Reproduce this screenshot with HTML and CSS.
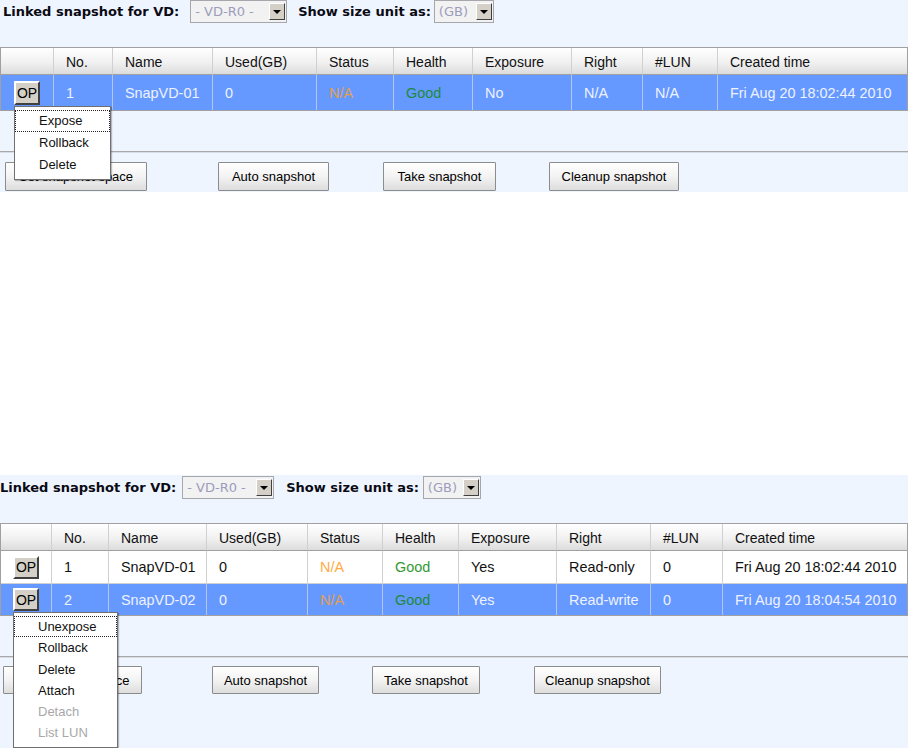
FILE: index.html
```html
<html>
<head>
<meta http-equiv="Content-Type" content="text/html; charset=utf-8" />
<link rel="stylesheet" href="styles.css">
</head>
<body>

<!-- snapshot list, one row, op menu open -->
<div class="panel p1">
    <div class="toolbar">
        <span class="lbl">Linked snapshot for VD:</span>
        <span class="sel sel-vd"><span class="val">- VD-R0 -</span><span class="arrow"></span></span>
        <span class="lbl lbl2">Show size unit as:</span>
        <span class="sel sel-unit"><span class="val">(GB)</span><span class="arrow"></span></span>
    </div>
    <table class="snaps">
        <colgroup>
            <col class="c1"><col class="c2"><col class="c3"><col class="c4"><col class="c5">
            <col class="c6"><col class="c7"><col class="c8"><col class="c9"><col class="c10">
        </colgroup>
        <tr>
            <th></th><th>No.</th><th>Name</th><th>Used(GB)</th><th>Status</th>
            <th>Health</th><th>Exposure</th><th>Right</th><th>#LUN</th><th>Created time</th>
        </tr>
        <tr class="picked">
            <td class="opcell">
                <span class="opwrap">
                    <button class="op">OP</button>
                    <div class="menu">
                        <div class="item focus">Expose</div>
                        <div class="item">Rollback</div>
                        <div class="item">Delete</div>
                    </div>
                </span>
            </td>
            <td>1</td><td>SnapVD-01</td><td>0</td><td class="na">N/A</td>
            <td class="good">Good</td><td>No</td><td>N/A</td><td>N/A</td><td>Fri Aug 20 18:02:44 2010</td>
        </tr>
    </table>
    <div class="sep"></div>
    <div class="btnbar">
        <button class="btn b1">Set snapshot space</button>
        <button class="btn b2">Auto snapshot</button>
        <button class="btn b3">Take snapshot</button>
        <button class="btn b4">Cleanup snapshot</button>
    </div>
</div>

<div class="blank"></div>

<!-- snapshot list, two rows, second one exposed -->
<div class="panel p2">
    <div class="toolbar">
        <span class="lbl">Linked snapshot for VD:</span>
        <span class="sel sel-vd"><span class="val">- VD-R0 -</span><span class="arrow"></span></span>
        <span class="lbl lbl2">Show size unit as:</span>
        <span class="sel sel-unit"><span class="val">(GB)</span><span class="arrow"></span></span>
    </div>
    <table class="snaps">
        <colgroup>
            <col class="c1"><col class="c2"><col class="c3"><col class="c4"><col class="c5">
            <col class="c6"><col class="c7"><col class="c8"><col class="c9"><col class="c10">
        </colgroup>
        <tr>
            <th></th><th>No.</th><th>Name</th><th>Used(GB)</th><th>Status</th>
            <th>Health</th><th>Exposure</th><th>Right</th><th>#LUN</th><th>Created time</th>
        </tr>
        <tr class="r1">
            <td class="opcell"><span class="opwrap"><button class="op">OP</button></span></td>
            <td>1</td><td>SnapVD-01</td><td>0</td><td class="na">N/A</td>
            <td class="good">Good</td><td>Yes</td><td>Read-only</td><td>0</td><td>Fri Aug 20 18:02:44 2010</td>
        </tr>
        <tr class="picked r2">
            <td class="opcell">
                <span class="opwrap">
                    <button class="op">OP</button>
                    <div class="menu">
                        <div class="item focus">Unexpose</div>
                        <div class="item">Rollback</div>
                        <div class="item">Delete</div>
                        <div class="item">Attach</div>
                        <div class="item off">Detach</div>
                        <div class="item off">List LUN</div>
                    </div>
                </span>
            </td>
            <td>2</td><td>SnapVD-02</td><td>0</td><td class="na">N/A</td>
            <td class="good">Good</td><td>Yes</td><td>Read-write</td><td>0</td><td>Fri Aug 20 18:04:54 2010</td>
        </tr>
    </table>
    <div class="sep"></div>
    <div class="btnbar">
        <button class="btn b1">Set snapshot space</button>
        <button class="btn b2">Auto snapshot</button>
        <button class="btn b3">Take snapshot</button>
        <button class="btn b4">Cleanup snapshot</button>
    </div>
</div>

</body>
</html>
```

FILE: styles.css
```css
body {
    margin: 0px;
    padding: 0px;
    background: #fff;
    font-family: "Liberation Sans", Arial, sans-serif;
}

.panel {
    width: 908px;
    background: #eef5ff;
    overflow: hidden;
}

.p1 {
    height: 192px;
}

.blank {
    height: 283px;
}

.p2 {
    height: 273px;
    padding-top: 1px;
    box-sizing: border-box;
}

/* top bar with the two selects */
.toolbar {
    height: 23px;
    display: flex;
    align-items: center;
    font-family: "DejaVu Sans", Verdana, sans-serif;
    font-size: 13px;
    color: #000;
}

.lbl {
    font-weight: bold;
    white-space: nowrap;
    color: #0a0a14;
}

.p1 .lbl {
    margin-left: 3px;
}

.p1 .lbl2 {
    margin-left: 11px;
}

.p2 .lbl2 {
    margin-left: 12px;
}

.sel {
    display: flex;
    align-items: center;
    height: 23px;
    box-sizing: border-box;
    border: 1px solid #a7a6aa;
    background: #f2f2f2;
    padding: 0 1px 0 4px;
}

.sel .val {
    flex: 1;
    color: #9c9cbc;
    white-space: nowrap;
}

.sel .arrow {
    width: 16px;
    height: 17px;
    box-sizing: border-box;
    background: #d4d0c8;
    border: 1px solid;
    border-color: #fff #404040 #404040 #fff;
    position: relative;
}

.sel .arrow:after {
    content: "";
    position: absolute;
    left: 3px;
    top: 6px;
    border-left: 4px solid transparent;
    border-right: 4px solid transparent;
    border-top: 4px solid #000;
}

.p1 .sel-vd {
    width: 97px;
    margin-left: 11px;
}

.p1 .sel-unit {
    width: 60px;
    margin-left: 3px;
}

.p2 .sel-vd {
    width: 92px;
    margin-left: 6px;
}

.p2 .sel-unit {
    width: 58px;
    margin-left: 4px;
}

/* snapshot table */
.snaps {
    margin-top: 24px;
    width: 908px;
    table-layout: fixed;
    border-collapse: separate;
    border-spacing: 0;
    border: 1px solid #a0a0a0;
    font-size: 14px;
}

.snaps th,
.snaps td {
    padding: 0 12px;
    text-align: left;
    white-space: nowrap;
    overflow: visible;
    border-left: 1px solid #d0d0d0;
}

.snaps th:first-child,
.snaps td:first-child {
    border-left: none;
}

.snaps th {
    height: 27px;
    font-weight: normal;
    color: #111;
    background: linear-gradient(#ffffff, #f1f1f1 55%, #dcdcdc);
    border-bottom: 1px solid #a0a0a0;
    padding-top: 1px;
}

.snaps td {
    color: #111;
    background: #fff;
    font-size: 14.4px;
}

.snaps tr.picked td {
    background: #6699ff;
    color: #eef2ff;
    border-left-color: #b4c6ee;
}

.snaps td.na {
    color: #ffaa44;
}

.snaps tr.picked td.na {
    color: #e0a050;
}

.snaps td.good {
    color: #339933;
}

.snaps tr.picked td.good {
    color: #1d8a3c;
}

.p1 .snaps td {
    height: 35px;
}

.p2 .snaps tr.r1 td {
    height: 33px;
    border-bottom: 1px solid #d0d0d0;
}

.p2 .snaps tr.r2 td {
    height: 31px;
}

.p1 .c1 { width: 52px; }
.p1 .c2 { width: 59px; }
.p1 .c3 { width: 100px; }
.p1 .c4 { width: 104px; }
.p1 .c5 { width: 77px; }
.p1 .c6 { width: 79px; }
.p1 .c7 { width: 99px; }
.p1 .c8 { width: 71px; }
.p1 .c9 { width: 75px; }
.p1 .c10 { width: 190px; }

.p2 .c1 { width: 50px; }
.p2 .c2 { width: 57px; }
.p2 .c3 { width: 98px; }
.p2 .c4 { width: 101px; }
.p2 .c5 { width: 75px; }
.p2 .c6 { width: 76px; }
.p2 .c7 { width: 98px; }
.p2 .c8 { width: 94px; }
.p2 .c9 { width: 72px; }
.p2 .c10 { width: 185px; }

.p1 .snaps td.opcell {
    padding-left: 13px;
}

.opwrap {
    position: relative;
    display: inline-block;
    vertical-align: middle;
}

button.op {
    display: block;
    width: 26px;
    height: 23px;
    padding: 0;
    margin: 0;
    background: #d4d0c8;
    border: 2px solid;
    border-color: #fff #404040 #404040 #fff;
    font-family: "Liberation Sans", Arial, sans-serif;
    font-size: 14px;
    color: #000;
}

.p1 button.op {
    height: 24px;
}

/* popup menu of the OP button */
.menu {
    position: absolute;
    left: 0px;
    top: 24px;
    z-index: 10;
    background: #fff;
    border: 1px solid #707070;
    box-shadow: 1px 1px 1px rgba(0, 0, 0, 0.25);
    padding: 3px 0 3px 0;
    font-size: 13px;
    color: #111;
}

.p1 .menu {
    width: 95px;
    top: 25px;
}

.p2 .menu {
    width: 103px;
}

.menu .item {
    height: 20px;
    line-height: 20px;
    padding-left: 23px;
    border: 1px solid transparent;
    white-space: nowrap;
}

.p2 .menu .item {
    height: 19.3px;
    line-height: 19px;
}

.menu .item.focus {
    border: 1px dotted #222;
}

.menu .item.off {
    color: #a8a8a8;
}

/* bottom buttons */
.sep {
    margin-top: 40px;
    border-top: 1px solid #a8a8a8;
    border-bottom: 1px solid #d8dce4;
}

.btnbar {
    display: flex;
    padding-top: 8px;
}

.p1 .btnbar {
    padding-top: 9px;
}

.btn {
    height: 29px;
    padding: 0;
    box-sizing: border-box;
    border: 1px solid #8c8c8c;
    border-radius: 1px;
    background: linear-gradient(#ffffff, #f3f3f3 50%, #dddddd);
    font-family: "Liberation Sans", Arial, sans-serif;
    font-size: 13px;
    color: #000;
}

.p1 .b1 { width: 142px; margin-left: 5px; }
.p1 .b2 { width: 111px; margin-left: 71px; }
.p1 .b3 { width: 113px; margin-left: 54px; }
.p1 .b4 { width: 130px; margin-left: 53px; }

.p2 .btn { height: 28px; }
.p2 .b1 { width: 139px; margin-left: 3px; }
.p2 .b2 { width: 107px; margin-left: 70px; }
.p2 .b3 { width: 108px; margin-left: 53px; }
.p2 .b4 { width: 127px; margin-left: 54px; }
```
